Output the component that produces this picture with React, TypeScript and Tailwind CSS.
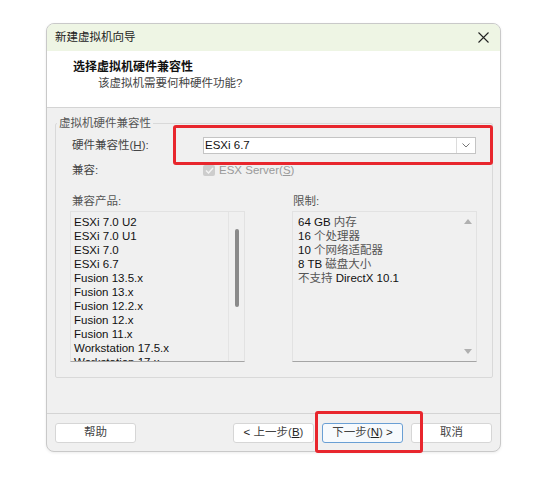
import React from "react";

const cjk = "font-['Liberation_Sans','Noto_Sans_CJK_SC',sans-serif]";

const products = [
  "ESXi 7.0 U2",
  "ESXi 7.0 U1",
  "ESXi 7.0",
  "ESXi 6.7",
  "Fusion 13.5.x",
  "Fusion 13.x",
  "Fusion 12.2.x",
  "Fusion 12.x",
  "Fusion 11.x",
  "Workstation 17.5.x",
  "Workstation 17.x",
];

const limits: [string, string][] = [
  ["64 GB ", "内存"],
  ["16 ", "个处理器"],
  ["10 ", "个网络适配器"],
  ["8 TB ", "磁盘大小"],
  ["", "不支持 "],
];

function Btn({ children, primary }: { children: React.ReactNode; primary?: boolean }) {
  return (
    <button
      className={
        "h-[20px] w-[81px] rounded-[3px] border text-[11.5px] leading-none text-[#444] flex items-center justify-center " +
        (primary ? "border-[#6a9fd4] bg-[#f7fafd]" : "border-[#d6d6d6] bg-white")
      }
    >
      {children}
    </button>
  );
}

export default function App() {
  return (
    <div className={`w-[556px] h-[500px] bg-white relative ${cjk}`}>
      <div className="absolute left-[46px] top-[23px] w-[455px] h-[429px] rounded-[8px] border border-[#c9c9c9] bg-[#f0f0f0] overflow-hidden flex flex-col shadow-[0_1px_3px_rgba(0,0,0,0.08)]">
        {/* title bar */}
        <div className="h-[27px] shrink-0 bg-[#eef5e4] flex items-center justify-between pl-[8px] pr-[10px]">
          <span className="text-[11.5px] text-[#222]">新建虚拟机向导</span>
          <svg width="11" height="11" viewBox="0 0 11 11" className="mr-[1px]">
            <path d="M0.5 0.5 L10.5 10.5 M10.5 0.5 L0.5 10.5" stroke="#222" strokeWidth="1.1" fill="none" />
          </svg>
        </div>

        {/* header */}
        <div className="h-[57px] shrink-0 bg-white border-b border-[#d4d4d4] flex flex-col pt-[8px]">
          <div className="pl-[26px] text-[12px] leading-[16px] font-bold text-[#111]">选择虚拟机硬件兼容性</div>
          <div className="pl-[51px] text-[11.5px] leading-[16px] text-[#444]">该虚拟机需要何种硬件功能?</div>
        </div>

        {/* body */}
        <div className="flex-1 px-[8px] pt-[7px]">
          <fieldset className="border border-[#d9d9d9] rounded-[2px] pl-[14px] pr-[15px] pb-[14px] h-[263px]">
            <legend className="ml-[-13px] px-[2px] text-[11.5px] leading-[16px] text-[#555]">虚拟机硬件兼容性</legend>

            <div className="mt-[6px] flex items-center h-[17px]">
              <div className="w-[133px] pl-[2px] text-[11.5px] text-[#444]">
                硬件兼容性(<span className="underline">H</span>):
              </div>
              <div className="flex h-[17px] w-[273px] border border-[#c4c4c4] bg-white">
                <div className="flex-1 flex items-center pl-[1px] text-[11.5px] text-[#111] border-r border-[#dcdcdc]">ESXi 6.7</div>
                <div className="w-[18px] flex items-center justify-center">
                  <svg width="8" height="5" viewBox="0 0 8 5">
                    <path d="M0.5 0.5 L4 4 L7.5 0.5" stroke="#777" strokeWidth="1" fill="none" />
                  </svg>
                </div>
              </div>
            </div>

            <div className="mt-[8px] flex items-center h-[17px]">
              <div className="w-[133px] pl-[2px] text-[11.5px] text-[#444]">兼容:</div>
              <div className="flex items-center gap-[4px]">
                <div className="w-[12px] h-[11px] rounded-[2px] bg-[#cdcdcd] flex items-center justify-center">
                  <svg width="9" height="7" viewBox="0 0 9 7">
                    <path d="M1 3.5 L3.5 6 L8 1" stroke="#f4f4f4" strokeWidth="1.4" fill="none" />
                  </svg>
                </div>
                <span className="text-[11.5px] text-[#9a9a9a]">
                  ESX Server(<span className="underline">S</span>)
                </span>
              </div>
            </div>

            <div className="mt-[14px] flex gap-[47px]">
              <div className="w-[175px] flex flex-col">
                <div className="pl-[2px] h-[16px] leading-[16px] text-[11.5px] text-[#555] mb-[2px]">兼容产品:</div>
                <div className="relative h-[151px] border border-[#e2e2e2] border-b-[#a5a5a5] overflow-hidden flex">
                  <div className="flex-1 pt-[3px] pl-[3px]">
                    {products.map((p) => (
                      <div key={p} className="h-[14px] leading-[14px] text-[11.5px] text-[#111] whitespace-nowrap">
                        {p}
                      </div>
                    ))}
                  </div>
                  <div className="w-[16px] border-l border-[#e4e4e4] flex justify-center pt-[17px]">
                    <div className="w-[4px] h-[78px] rounded-[2px] bg-[#8a8a8a]" />
                  </div>
                </div>
              </div>

              <div className="w-[185px] flex flex-col">
                <div className="pl-[1px] h-[16px] leading-[16px] text-[11.5px] text-[#555] mb-[2px]">限制:</div>
                <div className="h-[151px] border border-[#e2e2e2] border-b-[#a5a5a5] overflow-hidden flex">
                  <div className="flex-1 pt-[3px] pl-[5px]">
                    {limits.map(([a, b], i) => (
                      <div key={i} className="h-[14px] leading-[14px] text-[11.5px] whitespace-nowrap">
                        <span className="text-[#111]">{a}</span>
                        <span className="text-[#555]">{b}</span>
                        {i === 4 && <span className="text-[#111]">DirectX 10.1</span>}
                      </div>
                    ))}
                  </div>
                  <div className="w-[16px] flex flex-col items-center justify-between py-[7px]">
                    <svg width="8" height="5" viewBox="0 0 8 5">
                      <path d="M0 5 L4 0 L8 5 Z" fill="#b0b0b0" />
                    </svg>
                    <svg width="8" height="5" viewBox="0 0 8 5">
                      <path d="M0 0 L4 5 L8 0 Z" fill="#b0b0b0" />
                    </svg>
                  </div>
                </div>
              </div>
            </div>
          </fieldset>
        </div>

        {/* footer */}
        <div className="h-[38px] shrink-0 border-t border-[#d4d4d4] flex items-start pt-[9px] px-[8px]">
          <Btn>帮助</Btn>
          <div className="flex-1" />
          <div className="flex gap-[8px]">
            <Btn>
              <span className="text-[#222]">&lt;&nbsp;</span>上一步(<span className="underline text-[#222]">B</span>)
            </Btn>
            <Btn primary>
              下一步(<span className="underline text-[#222]">N</span>)<span className="text-[#222]">&nbsp;&gt;</span>
            </Btn>
            <Btn>取消</Btn>
          </div>
        </div>
      </div>

      {/* highlight markers */}
      <div className="absolute left-[173px] top-[125px] w-[320px] h-[40px] rounded-[3px] border-[3px] border-[#e8262d]" />
      <div className="absolute left-[315px] top-[411px] w-[108px] h-[42px] rounded-[3px] border-[3px] border-[#e8262d]" />
    </div>
  );
}
